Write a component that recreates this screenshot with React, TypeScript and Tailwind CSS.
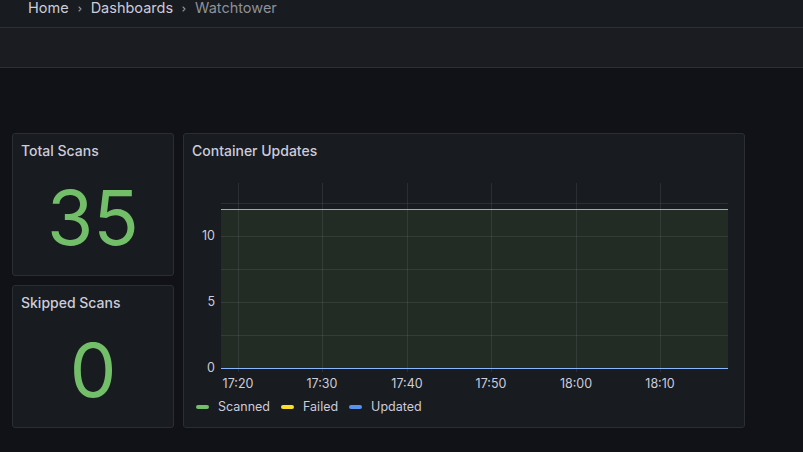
import React from "react";

const font = { fontFamily: "Inter, 'Noto Sans', sans-serif" };

function Chevron() {
  return (
    <svg width="12" height="12" viewBox="0 0 24 24" fill="none" stroke="#8e9199" strokeWidth="2.2" strokeLinecap="round" strokeLinejoin="round">
      <path d="m10 8 4 4-4 4" />
    </svg>
  );
}

function StatPanel({ title, value, size }: { title: string; value: string; size: string }) {
  return (
    <div className="flex h-[143px] flex-col rounded-[3px] border border-[#2a2d33] bg-[#181b1f]">
      <div className="px-2 pt-[8px] text-[14px] font-medium leading-[18px] text-[#ccccdc]">{title}</div>
      <div className={`flex flex-1 items-center justify-center leading-none text-[#73bf69] ${size}`}>{value}</div>
    </div>
  );
}

function Chart() {
  const gridY = [32, 65, 98, 131, 164];
  const xs = [
    { x: 54, l: "17:20" },
    { x: 138, l: "17:30" },
    { x: 223, l: "17:40" },
    { x: 307, l: "17:50" },
    { x: 392, l: "18:00" },
    { x: 476, l: "18:10" },
  ];
  return (
    <svg width="560" height="224" viewBox="0 0 560 224" className="block" style={font} shapeRendering="crispEdges">
      <rect x="37" y="38" width="507" height="159" fill="#222b24" />
      {gridY.map((y) => (
        <rect key={y} x="37" y={y} width="507" height="1" fill="#ccccdc" fillOpacity="0.11" />
      ))}
      {xs.map((t) => (
        <rect key={t.x} x={t.x} y="12" width="1" height="189" fill="#ccccdc" fillOpacity="0.11" />
      ))}
      <rect x="37" y="38" width="507" height="1" fill="#6fd45a" />
      <rect x="37" y="197" width="507" height="1" fill="#8ab8ff" />
      <g shapeRendering="auto">
        <text x="31" y="69" textAnchor="end" fontSize="12.5" fill="#ccccdc">10</text>
        <text x="31" y="135" textAnchor="end" fontSize="12.5" fill="#ccccdc">5</text>
        <text x="31" y="201" textAnchor="end" fontSize="12.5" fill="#ccccdc">0</text>
        {xs.map((t) => (
          <text key={t.l} x={t.x} y="217" textAnchor="middle" fontSize="12.5" fill="#ccccdc">{t.l}</text>
        ))}
      </g>
    </svg>
  );
}

function Legend({ color, label }: { color: string; label: string }) {
  return (
    <div className="flex items-center">
      <span className={`mr-[9px] h-[4px] w-[13px] rounded-full ${color}`} />
      <span className="text-[12.5px] text-[#ccccdc]">{label}</span>
    </div>
  );
}

export default function App() {
  return (
    <div className="h-[452px] w-full overflow-hidden bg-[#111217]" style={font}>
      <div className="h-[28px] border-b border-[#2c2f36] bg-[#181b1f] pl-[28px]">
        <div className="flex h-[17px] items-center text-[14.5px] leading-none">
          <span className="text-[#ccccdc]">Home</span>
          <span className="mx-[5px]"><Chevron /></span>
          <span className="text-[#ccccdc]">Dashboards</span>
          <span className="mx-[5px]"><Chevron /></span>
          <span className="text-[#8e9199]">Watchtower</span>
        </div>
      </div>
      <div className="h-[40px] border-b border-[#2c2f36] bg-[#1a1c21]" />
      <div className="flex gap-[9px] pl-[12px] pt-[65px]">
        <div className="flex w-[162px] flex-col gap-[9px]">
          <StatPanel title="Total Scans" value="35" size="text-[75px]" />
          <StatPanel title="Skipped Scans" value="0" size="text-[74px]" />
        </div>
        <div className="flex h-[295px] w-[562px] flex-col rounded-[3px] border border-[#2a2d33] bg-[#181b1f]">
          <div className="px-2 pt-[8px] text-[14px] font-medium leading-[18px] text-[#ccccdc]">Container Updates</div>
          <div className="mt-[11px]">
            <Chart />
          </div>
          <div className="mt-[3px] flex items-center gap-[11px] pl-[12px]">
            <Legend color="bg-[#73bf69]" label="Scanned" />
            <Legend color="bg-[#fade2a]" label="Failed" />
            <Legend color="bg-[#5794f2]" label="Updated" />
          </div>
        </div>
      </div>
    </div>
  );
}
